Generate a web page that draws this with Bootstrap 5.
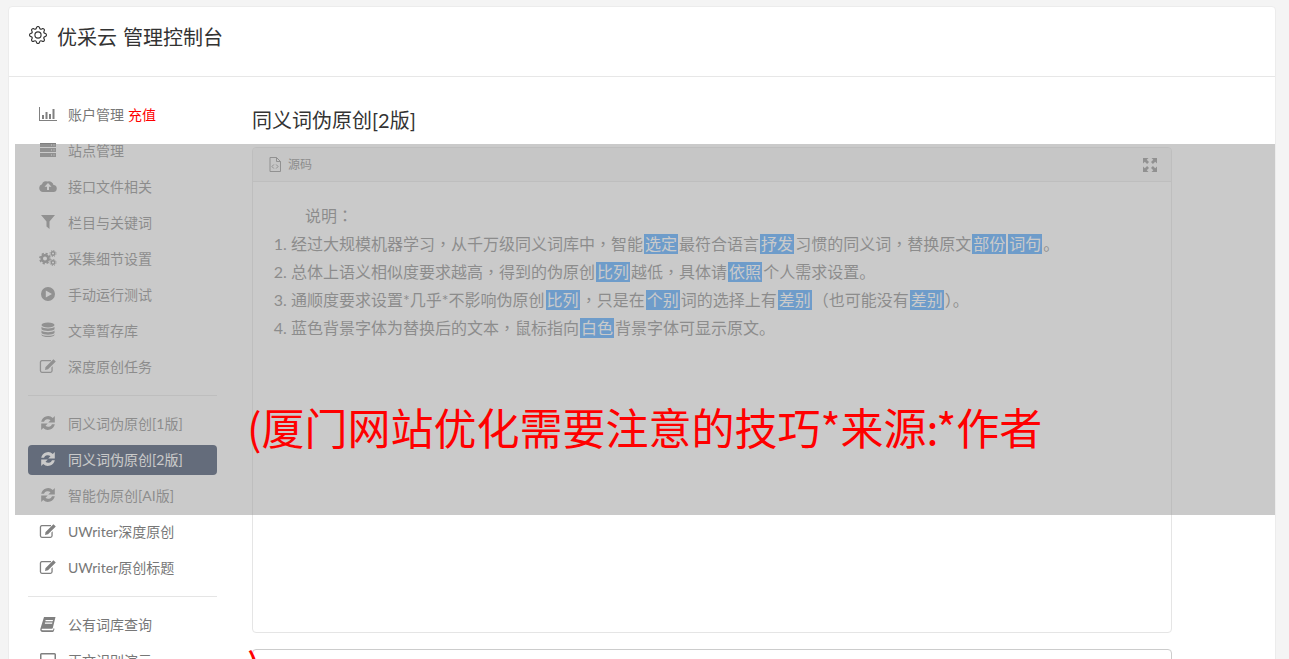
<!DOCTYPE html>
<html lang="zh-CN">
<head>
<meta charset="utf-8">
<title>优采云 管理控制台</title>
<link href="https://cdn.jsdelivr.net/npm/bootstrap@5.3.0/dist/css/bootstrap.min.css" rel="stylesheet">
<style>
html,body{height:659px;overflow:hidden}
body{background:#f4f4f4;padding:6px 13px 0 8px;font-family:Lato,"Noto Sans CJK SC",sans-serif;color:#333;position:relative}
.shell{border-color:#ececec;border-radius:4px;background:#fff}
.shell-head{height:70px;border-bottom:1px solid #e7e7e7;padding:0 20px 10px;gap:10px;font-size:20px;color:#333;word-spacing:1px}
.gear-ico{width:18px;height:18px;margin-top:-3px;fill:#333}
.side{width:189px;margin-left:19px;padding-top:23px;flex:none}
.side-item{display:flex;align-items:center;height:30px;margin-bottom:6px;padding:0 0 2px 11px;border-radius:4px;color:#777;font-size:14px;text-decoration:none;gap:11px}
.side-item svg{width:18px;height:16px;flex:none;fill:#808080;color:#808080}
.side-item.is-on{background:#1e3050;color:#fff}
.side-item.is-on svg{fill:#fff;color:#fff}
.side-sep{margin:13px 0;border:0;border-top:1px solid #e5e5e5;opacity:1}
.recharge{color:#f00;margin-left:4px}
.main-col{width:920px;margin-left:35px;padding-top:29px;flex:none}
.page-name{font-size:20px;line-height:28px;margin:0 0 13px;font-weight:400;color:#333}
.editor{height:486px;border:1px solid #e5e5e5;border-radius:4px;margin-bottom:16px}
.editor-top{height:34px;background:#f5f5f5;border-bottom:1px solid #e5e5e5;padding:0 14px 0 16px;font-size:12px;color:#777;border-radius:4px 4px 0 0}
.editor-top svg{width:12px;height:15px;margin-right:7px}
.editor-top .full-ico{width:14px;height:14px;margin:0;fill:#808080}
.editor-body{padding:19px 0 0;font-size:16px;line-height:28px;color:#777}
.editor-body p{margin:0 0 0 52px;height:28px}
.editor-body ol{margin:0;padding-left:38px}
.editor-body li{height:28px}
.swap{background:#39f;color:#fff;padding:0 1px;margin:0 1px;display:inline-block;line-height:20px}
.pct{font-family:"Noto Sans CJK TC",sans-serif}
.panel-two{height:400px;border:1px solid #ccc;border-radius:4px}
.veil{position:absolute;left:15px;top:144px;width:1260px;height:371px;background:rgba(158,158,158,.55);padding-left:232px;padding-top:162px;color:#f00;font-size:43px;line-height:240px;font-family:"Noto Sans CJK SC",sans-serif;white-space:nowrap}
</style>
</head>
<body>
<svg width="0" height="0" class="position-absolute">
<defs>
<symbol id="i-bars" viewBox="0 0 18 16"><path d="M0 1h1v13h17v1H0z"/><path d="M3 9h2v4H3zM6.500 6h2v7h-2zM10 8h2v5h-2zM13.500 3h2v10h-2z"/></symbol>
<symbol id="i-server" viewBox="0 0 18 16"><path fill-rule="evenodd" d="M1 1h16v4H1zM12 2.400v1.200h1V2.400zM14.500 2.400v1.200h1V2.400zM1 6h16v4H1zM12 7.400v1.200h1V7.400zM14.500 7.400v1.200h1V7.400zM1 11h16v4H1zM12 12.400v1.200h1v-1.200zM14.500 12.400v1.200h1v-1.200z"/></symbol>
<symbol id="i-cloud" viewBox="0 0 18 16"><path fill-rule="evenodd" d="M4 14a4 4 0 0 1-1-7.800A4 4 0 0 1 8.600 3.600 4.500 4.500 0 0 1 14.500 7 3.500 3.500 0 0 1 14 14zM9 5 5.500 8.800H8V12h2V8.800h2.500z"/></symbol>
<symbol id="i-filter" viewBox="0 0 18 16"><path d="M2 1h14L10.500 7.500V15L7.500 12.500V7.500z"/></symbol>
<symbol id="i-cogs" viewBox="0 0 18 16"><g fill="none" stroke="currentColor"><circle cx="6" cy="8.500" r="3.300" stroke-width="2.600"/><circle cx="6" cy="8.500" r="5.100" stroke-width="1.600" stroke-dasharray="2.200 1.800"/><circle cx="14" cy="3.500" r="1.700" stroke-width="1.400"/><circle cx="14" cy="3.500" r="3" stroke-width="1" stroke-dasharray="1.200 1.150"/><circle cx="14" cy="12.500" r="1.700" stroke-width="1.400"/><circle cx="14" cy="12.500" r="3" stroke-width="1" stroke-dasharray="1.200 1.150"/></g></symbol>
<symbol id="i-play" viewBox="0 0 18 16"><path fill-rule="evenodd" d="M9 1a7 7 0 1 1 0 14A7 7 0 0 1 9 1zM6.800 4.500v7L13 8z"/></symbol>
<symbol id="i-db" viewBox="0 0 18 16"><ellipse cx="9" cy="3" rx="6.500" ry="2.600"/><path d="M2.500 4.800C4 7 14 7 15.500 4.800V7.300C14 9.500 4 9.500 2.500 7.300zM2.500 8.500C4 10.700 14 10.700 15.500 8.500V11C14 13.200 4 13.200 2.500 11zM2.500 12.200C4 14.400 14 14.400 15.500 12.200V13C14 15.800 4 15.800 2.500 13z"/></symbol>
<symbol id="i-edit" viewBox="0 0 18 16"><path d="M2.500 2h9.500v1.300H3a1 1 0 0 0-.9.900v8.600a1 1 0 0 0 .9.900h8.500a1 1 0 0 0 .9-.9V9.500l1.300-1.300v4.600a2.300 2.300 0 0 1-2.200 2.200H2.800A2.300 2.300 0 0 1 .8 12.800V4.100A2.300 2.300 0 0 1 2.500 2z"/><path d="M14.400 1.200 16.800 3.500 9 11.300l-3 .7.600-3zM6.800 11.200l-.5-1.700 1.700.5z"/></symbol>
<symbol id="i-sync" viewBox="0 0 18 16"><path d="M2.200 6.800A7 7 0 0 1 13.800 3L15.800 1V7.600H9.200L11.500 5.300A4 4 0 0 0 5 6.800zM15.800 9.200A7 7 0 0 1 4.200 13L2.200 15V8.400H8.800L6.500 10.700A4 4 0 0 0 13 9.200z"/></symbol>
<symbol id="i-book" viewBox="0 0 18 16"><path fill-rule="evenodd" d="M5 1h11.500l-2.700 11a1 1 0 0 1-1 .8H3.500c-.8 0-1 .5-.8 1 .1.300.5.500 1 .500H14L14.800 12 15.500 13 14.700 15.300c-.2.500-.5.700-1 .7H3.500C2 16 1 14.600 1.300 13zM6.500 4v1.200h7.200L14 4zM5.900 6.500v1.200h7.200l.3-1.200z"/></symbol>
<symbol id="i-win" viewBox="0 0 18 16"><path fill-rule="evenodd" d="M2.500 1h13A1.500 1.500 0 0 1 17 2.500v11a1.500 1.500 0 0 1-1.500 1.500h-13A1.500 1.500 0 0 1 1 13.500v-11A1.500 1.500 0 0 1 2.500 1zM2.500 2.500v11h13v-11z"/></symbol>
</defs>
</svg>

<div class="card shell">
  <div class="shell-head d-flex align-items-center">
    <svg class="gear-ico" viewBox="0 0 16 16"><path d="M8 4.754a3.246 3.246 0 1 0 0 6.492 3.246 3.246 0 0 0 0-6.492zM5.754 8a2.246 2.246 0 1 1 4.492 0 2.246 2.246 0 0 1-4.492 0z"/><path d="M9.796 1.343c-.527-1.790-3.065-1.790-3.592 0l-.094.319a.873.873 0 0 1-1.255.520l-.292-.160c-1.640-.892-3.433.902-2.540 2.541l.159.292a.873.873 0 0 1-.520 1.255l-.319.094c-1.790.527-1.790 3.065 0 3.592l.319.094a.873.873 0 0 1 .520 1.255l-.160.292c-.892 1.640.901 3.434 2.541 2.540l.292-.159a.873.873 0 0 1 1.255.520l.094.319c.527 1.790 3.065 1.790 3.592 0l.094-.319a.873.873 0 0 1 1.255-.520l.292.160c1.640.893 3.434-.902 2.540-2.541l-.159-.292a.873.873 0 0 1 .520-1.255l.319-.094c1.790-.527 1.790-3.065 0-3.592l-.319-.094a.873.873 0 0 1-.520-1.255l.160-.292c.893-1.640-.902-3.433-2.541-2.540l-.292.159a.873.873 0 0 1-1.255-.520l-.094-.319zm-2.633.283c.246-.835 1.428-.835 1.674 0l.094.319a1.873 1.873 0 0 0 2.693 1.115l.291-.160c.764-.415 1.600.420 1.184 1.185l-.159.292a1.873 1.873 0 0 0 1.116 2.692l.318.094c.835.246.835 1.428 0 1.674l-.319.094a1.873 1.873 0 0 0-1.115 2.693l.160.291c.415.764-.420 1.600-1.185 1.184l-.291-.159a1.873 1.873 0 0 0-2.693 1.116l-.094.318c-.246.835-1.428.835-1.674 0l-.094-.319a1.873 1.873 0 0 0-2.692-1.115l-.292.160c-.764.415-1.600-.420-1.184-1.185l.159-.291A1.873 1.873 0 0 0 1.945 8.930l-.319-.094c-.835-.246-.835-1.428 0-1.674l.319-.094A1.873 1.873 0 0 0 3.060 4.377l-.160-.292c-.415-.764.420-1.600 1.185-1.184l.292.159a1.873 1.873 0 0 0 2.692-1.115l.094-.319z"/></svg>
    <span>优采云 管理控制台</span>
  </div>
  <div class="d-flex">
    <nav class="side">
      <a class="side-item" href="#"><svg><use href="#i-bars"/></svg><span>账户管理<span class="recharge">充值</span></span></a>
      <a class="side-item" href="#"><svg><use href="#i-server"/></svg><span>站点管理</span></a>
      <a class="side-item" href="#"><svg><use href="#i-cloud"/></svg><span>接口文件相关</span></a>
      <a class="side-item" href="#"><svg><use href="#i-filter"/></svg><span>栏目与关键词</span></a>
      <a class="side-item" href="#"><svg><use href="#i-cogs"/></svg><span>采集细节设置</span></a>
      <a class="side-item" href="#"><svg><use href="#i-play"/></svg><span>手动运行测试</span></a>
      <a class="side-item" href="#"><svg><use href="#i-db"/></svg><span>文章暂存库</span></a>
      <a class="side-item" href="#"><svg><use href="#i-edit"/></svg><span>深度原创任务</span></a>
      <hr class="side-sep">
      <a class="side-item" href="#"><svg><use href="#i-sync"/></svg><span>同义词伪原创[1版]</span></a>
      <a class="side-item is-on" href="#"><svg><use href="#i-sync"/></svg><span>同义词伪原创[2版]</span></a>
      <a class="side-item" href="#"><svg><use href="#i-sync"/></svg><span>智能伪原创[AI版]</span></a>
      <a class="side-item" href="#"><svg><use href="#i-edit"/></svg><span>UWriter深度原创</span></a>
      <a class="side-item" href="#"><svg><use href="#i-edit"/></svg><span>UWriter原创标题</span></a>
      <hr class="side-sep">
      <a class="side-item" href="#"><svg><use href="#i-book"/></svg><span>公有词库查询</span></a>
      <a class="side-item" href="#"><svg><use href="#i-win"/></svg><span>正文识别演示</span></a>
    </nav>
    <main class="main-col">
      <h4 class="page-name">同义词伪原创[2版]</h4>
      <section class="editor">
        <div class="editor-top d-flex align-items-center">
          <svg viewBox="0 0 12 15" fill="none" stroke="#808080"><path d="M1 .5h6.500l4 4V14.500H1zM7.500.5v4h4"/><path d="M4.800 7.500 3 9.500l1.800 2M7.200 7.500 9 9.500l-1.800 2"/></svg>
          <span>源码</span>
          <svg class="full-ico ms-auto" viewBox="0 0 14 14"><path d="M0 0h5.500L3.700 1.800 6 4.100 4.100 6 1.800 3.700 0 5.500zM14 0v5.500l-1.800-1.800L9.900 6 8 4.100 10.300 1.800 8.500 0zM0 14V8.500l1.800 1.800L4.100 8 6 9.900 3.700 12.200 5.500 14zM14 14H8.500l1.800-1.800L8 9.900 9.900 8l2.300 2.300L14 8.500z"/></svg>
        </div>
        <div class="editor-body">
          <p>说明<span class="pct" lang="zh-Hant">：</span></p>
          <ol>
            <li>经过大规模机器学习<span class="pct" lang="zh-Hant">，</span>从千万级同义词库中<span class="pct" lang="zh-Hant">，</span>智能<span class="swap">选定</span>最符合语言<span class="swap">抒发</span>习惯的同义词<span class="pct" lang="zh-Hant">，</span>替换原文<span class="swap">部份</span><span class="swap">词句</span>。</li>
            <li>总体上语义相似度要求越高<span class="pct" lang="zh-Hant">，</span>得到的伪原创<span class="swap">比列</span>越低<span class="pct" lang="zh-Hant">，</span>具体请<span class="swap">依照</span>个人需求设置。</li>
            <li>通顺度要求设置*几乎*不影响伪原创<span class="swap">比列</span><span class="pct" lang="zh-Hant">，</span>只是在<span class="swap">个别</span>词的选择上有<span class="swap">差别</span><span class="pct" lang="zh-Hant">（</span>也可能没有<span class="swap">差别</span><span class="pct" lang="zh-Hant">）</span>。</li>
            <li>蓝色背景字体为替换后的文本<span class="pct" lang="zh-Hant">，</span>鼠标指向<span class="swap">白色</span>背景字体可显示原文。</li>
          </ol>
        </div>
      </section>
      <section class="panel-two"></section>
    </main>
  </div>
</div>
<div class="veil">(厦门网站优化需要注意的技巧*来源:*作者<br>)</div>
<script src="https://cdn.jsdelivr.net/npm/bootstrap@5.3.0/dist/js/bootstrap.bundle.min.js"></script>
</body>
</html>
